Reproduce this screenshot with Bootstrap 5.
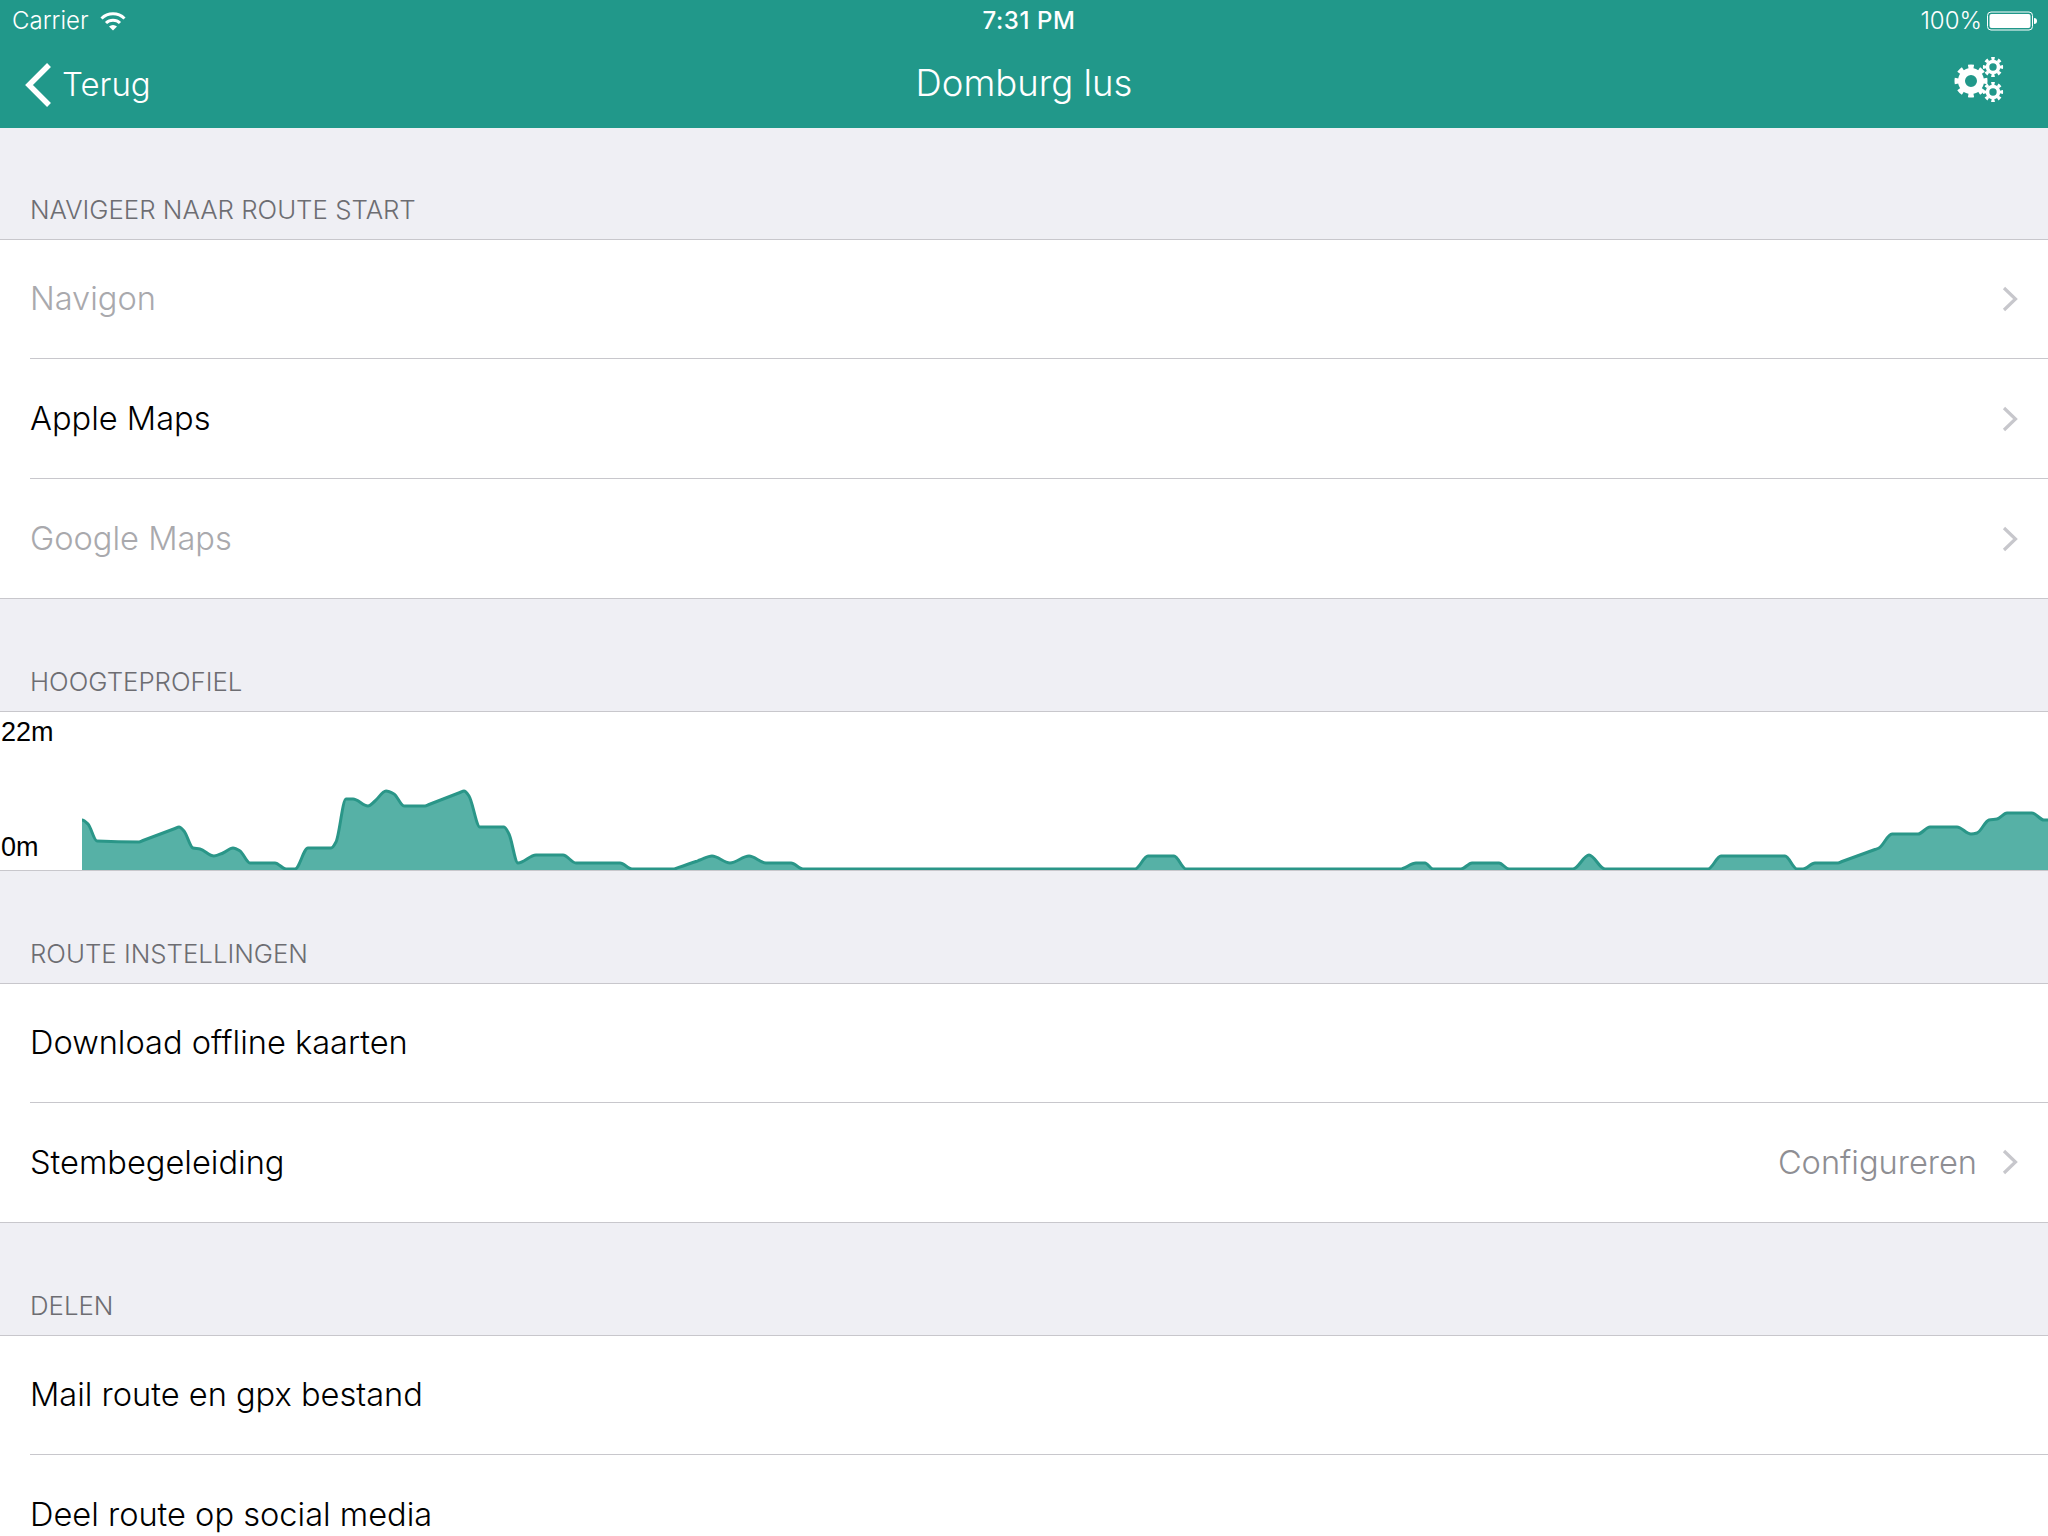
<!DOCTYPE html>
<html lang="nl">
<head>
  <meta charset="UTF-8" />
  <meta name="viewport" content="width=device-width, initial-scale=1.0"/>
  <title>Domburg lus</title>
  <link href="https://cdn.jsdelivr.net/npm/bootstrap@5.3.0/dist/css/bootstrap.min.css" rel="stylesheet" />
  <style>
    html, body { height: 1536px; overflow: hidden; }
    body { background: #efeff4; font-family: Inter, "Liberation Sans", sans-serif; color: #000; }
    .app-header { height: 128px; background: #21988a; color: #fff; }
    .status-bar { height: 40px; padding: 2px 11px 0 12px; font-size: 24px; font-weight: 300; }
    .status-time { font-weight: 500; font-size: 24px; letter-spacing: .6px; margin-left: 9px; }
    .status-side { width: 300px; }
    .status-wifi { margin-left: 3px; }
    .status-battery { margin-left: -3px; }
    .nav-bar { height: 88px; display: grid; grid-template-columns: 1fr auto 1fr; padding: 0 24px 4px; }
    .nav-back { font-size: 33px; font-weight: 300; gap: 11px; margin-top: 6px; }
    .nav-title { font-size: 36.5px; font-weight: 300; margin-top: 2px; }
    .nav-gears { margin: 0 20px 6px 0; }
    .section-head { height: 111px; padding: 0 30px 14px; font-size: 25.8px; font-weight: 300; color: #6d6d72; line-height: 30px; }
    .section-head.next { height: 112px; }
    .table-group { background: #fff; border-top: 1px solid #c8c7cc; border-bottom: 1px solid #c8c7cc; border-radius: 0; }
    .table-row { height: 120px; margin-left: 30px; padding: 0 30px 0 0; background: transparent; border: 0; border-bottom: 1px solid #c8c7cc; border-radius: 0; font-size: 32.6px; font-weight: 300; color: #000; }
    .table-row:first-child { height: 119px; padding-bottom: 1px; }
    .table-row:last-child { border-bottom: 0; height: 119px; }
    .table-row.off { color: #a9a9ad; }
    .row-value { color: #8e8e93; margin-right: 25px; }
    .chart-box { height: 160px; background: #fff; border-top: 1px solid #c8c7cc; border-bottom: 1px solid #c8c7cc; }
    .chart-axis { width: 82px; padding: 5px 0 8px 1px; font-family: "Liberation Sans", sans-serif; font-size: 27px; line-height: 30px; }
    .chart-svg { width: 1966px; height: 158px; }
  </style>
</head>
<body>
  <div class="app-header">
    <div class="status-bar d-flex align-items-center justify-content-between">
      <div class="status-side d-flex align-items-center gap-2">
        <span>Carrier</span>
        <svg class="status-wifi" width="26" height="20" viewBox="0 0 26 20" fill="none" stroke="#fff" stroke-width="3">
          <path d="M1.5 7.5a16.5 16.5 0 0 1 23 0"/>
          <path d="M6 12a10 10 0 0 1 14 0"/>
          <path d="M13 19.5l-4-4a6 6 0 0 1 8 0z" fill="#fff" stroke="none"/>
        </svg>
      </div>
      <div class="status-time">7:31 PM</div>
      <div class="status-side d-flex align-items-center justify-content-end gap-2">
        <span>100%</span>
        <svg class="status-battery" width="50" height="20" viewBox="0 0 50 20">
          <rect x="0.5" y="1" width="45" height="18" rx="3.5" fill="none" stroke="#fff"/>
          <rect x="2.5" y="3" width="41" height="14" rx="2" fill="#fff"/>
          <path d="M47 7c2 0 3 1 3 3s-1 3-3 3z" fill="#fff"/>
        </svg>
      </div>
    </div>
    <div class="nav-bar align-items-center">
      <div class="nav-back d-flex align-items-center">
        <svg width="27" height="44" viewBox="0 0 27 44" fill="none" stroke="#fff" stroke-width="5.5">
          <path d="M25 2L5 22l20 20"/>
        </svg>
        <span>Terug</span>
      </div>
      <div class="nav-title">Domburg lus</div>
      <div class="d-flex justify-content-end">
        <svg class="nav-gears" width="50" height="48" viewBox="0 0 50 48" fill="none" stroke="#fff">
          <g transform="translate(17 26)">
            <circle r="9.5" stroke-width="7"/>
            <circle r="14" stroke-width="5" pathLength="16" stroke-dasharray="1 1" stroke-dashoffset="0.5"/>
          </g>
          <g transform="translate(39 12)">
            <circle r="5.5" stroke-width="3.6"/>
            <circle r="8.5" stroke-width="3.2" pathLength="16" stroke-dasharray="1 1" stroke-dashoffset="0.5"/>
          </g>
          <g transform="translate(39 37)">
            <circle r="5.5" stroke-width="3.6"/>
            <circle r="8.5" stroke-width="3.2" pathLength="16" stroke-dasharray="1 1" stroke-dashoffset="0.5"/>
          </g>
        </svg>
      </div>
    </div>
  </div>

  <div class="section-head d-flex align-items-end">NAVIGEER NAAR ROUTE START</div>
  <div class="list-group list-group-flush table-group">
    <div class="list-group-item table-row off d-flex align-items-center justify-content-between">Navigon
      <svg width="16" height="26" viewBox="0 0 16 26" fill="none" stroke="#c7c7cc" stroke-width="3.2"><path d="M2 2l11.5 11L2 24"/></svg>
    </div>
    <div class="list-group-item table-row d-flex align-items-center justify-content-between">Apple Maps
      <svg width="16" height="26" viewBox="0 0 16 26" fill="none" stroke="#c7c7cc" stroke-width="3.2"><path d="M2 2l11.5 11L2 24"/></svg>
    </div>
    <div class="list-group-item table-row off d-flex align-items-center justify-content-between">Google Maps
      <svg width="16" height="26" viewBox="0 0 16 26" fill="none" stroke="#c7c7cc" stroke-width="3.2"><path d="M2 2l11.5 11L2 24"/></svg>
    </div>
  </div>

  <div class="section-head next d-flex align-items-end">HOOGTEPROFIEL</div>
  <div class="chart-box d-flex">
    <div class="chart-axis d-flex flex-column justify-content-between">
      <span>22m</span>
      <span>0m</span>
    </div>
    <svg class="chart-svg" viewBox="82 711 1966 158" preserveAspectRatio="none">
      <path id="chartFill" fill="#56b1a6"/>
      <path id="chartLine" fill="none" stroke="#2a9688" stroke-width="3"/>
    </svg>
  </div>

  <div class="section-head next d-flex align-items-end">ROUTE INSTELLINGEN</div>
  <div class="list-group list-group-flush table-group">
    <div class="list-group-item table-row d-flex align-items-center">Download offline kaarten</div>
    <div class="list-group-item table-row d-flex align-items-center justify-content-between">Stembegeleiding
      <div class="d-flex align-items-center">
        <span class="row-value">Configureren</span>
        <svg width="16" height="26" viewBox="0 0 16 26" fill="none" stroke="#c7c7cc" stroke-width="3.2"><path d="M2 2l11.5 11L2 24"/></svg>
      </div>
    </div>
  </div>

  <div class="section-head next d-flex align-items-end">DELEN</div>
  <div class="list-group list-group-flush table-group">
    <div class="list-group-item table-row d-flex align-items-center">Mail route en gpx bestand</div>
    <div class="list-group-item table-row d-flex align-items-center">Deel route op social media</div>
  </div>

  <script>
    // elevation points read off the profile, in page pixels
    const points = [
      [82,819],[88,823],[97,840],[139,841],[143,839.5],[175,827.5],[179,826],[184,830],[193,847],[200,848],[214,855],[223,852],
      [233,847],[240,850],[250,862],[275,862],[286,868],[295,868],[308,847],[331,847],[336,841],[346,798],
      [353,798],[368,805],[375,800],[386,790],[394,793],[404,805],[425,805],[429,803.5],[460,791.5],[464,790],[469,795],[480,826],
      [504,826],[509,833],[518,862],[536,854],[563,854],[576,862],[620,862],[632,868],[674,868],[678,866.7],[696,860.5],[700,859],
      [712,855],[730,862],[749,855],[766,862],[791,862],[803,868],[1135,868],[1148,855],[1174,855],[1186,868],
      [1400,868],[1416,862],[1425,862],[1433,868],[1461,868],[1472,862],[1499,862],[1509,868],[1573,868],
      [1589,854],[1605,868],[1708,868],[1721,855],[1785,855],[1797,868],[1803,868],[1815,862],[1838,862],[1842,860.5],[1875,848.5],
      [1879,847],[1892,833],[1918,833],[1930,826],[1957,826],[1971,833],[1977,832],[1989,819],[1997,818],
      [2007,812],[2032,812],[2044,819],[2048,819]
    ];
    // monotone cubic through the points, flat runs stay flat
    const slopes = points.slice(1).map((p, i) => (p[1] - points[i][1]) / (p[0] - points[i][0]));
    const tangent = (i) => {
      if (i === 0 || i === points.length - 1) return 0;
      const a = slopes[i - 1], b = slopes[i];
      return a * b <= 0 ? 0 : 2 * a * b / (a + b);
    };
    let line = "M" + points[0].join(" ");
    for (let i = 1; i < points.length; i++) {
      const [x0, y0] = points[i - 1];
      const [x1, y1] = points[i];
      const c = (x1 - x0) / 3;
      line += ` C${x0 + c} ${y0 + c * tangent(i - 1)} ${x1 - c} ${y1 - c * tangent(i)} ${x1} ${y1}`;
    }
    document.getElementById("chartLine").setAttribute("d", line);
    document.getElementById("chartFill").setAttribute("d", line + " L2048 870 L82 870 Z");
  </script>
  <script src="https://cdn.jsdelivr.net/npm/bootstrap@5.3.0/dist/js/bootstrap.bundle.min.js"></script>
</body>
</html>
